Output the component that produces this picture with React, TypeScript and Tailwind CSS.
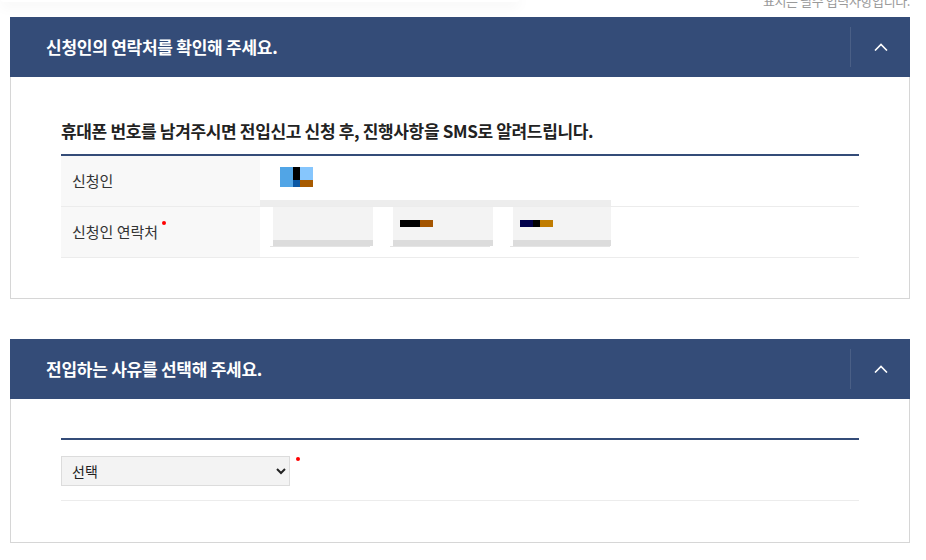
import React from "react";

const font = { fontFamily: '"Noto Sans CJK KR", "Noto Sans", sans-serif' };

function Chevron() {
  return (
    <svg width="14" height="8" viewBox="0 0 14 8" fill="none">
      <polyline points="1,7.5 7,1.5 13,7.5" stroke="#fff" strokeWidth="1.6" />
    </svg>
  );
}

function SectionHeader({ title }: { title: string }) {
  return (
    <div className="flex h-[60px] items-center bg-[#344c78]">
      <h2 className="flex-1 pl-[36px] text-[17px] font-bold tracking-[-0.015em] text-white">{title}</h2>
      <div className="h-[40px] w-px bg-[#4a5f86]" />
      <button type="button" className="flex h-[60px] w-[59px] items-center justify-center">
        <Chevron />
      </button>
    </div>
  );
}

function RedDot() {
  return <span className="inline-block h-[4px] w-[4px] rounded-full bg-[#f00]" />;
}

function Pixels({ cols }: { cols: { w: number; c: string }[] }) {
  return (
    <div className="flex h-[7px]">
      {cols.map((p, i) => (
        <div key={i} className="h-full" style={{ width: p.w, background: p.c }} />
      ))}
    </div>
  );
}

function PhoneBox({ width, pixels }: { width: number; pixels?: { w: number; c: string }[] }) {
  return (
    <div className="flex flex-col" style={{ width }}>
      <div className="h-[33px] bg-[#f3f3f3] pl-[7px] pt-[13px]">{pixels ? <Pixels cols={pixels} /> : null}</div>
      <div className="h-[6px] bg-[#dcdcdc]" />
      <div className="-ml-[3px] h-px w-[100px] bg-[#e4e4e4]" />
    </div>
  );
}

export default function App() {
  return (
    <div className="min-h-[560px] bg-white text-[#333]" style={font}>
      <div className="flex h-[17px] items-start justify-between overflow-hidden">
        <div className="-mt-[6px] h-[8px] w-[520px] rounded-full shadow-[0_4px_14px_rgba(0,0,0,0.05)]" />
        <p className="-mt-[9px] pr-[16px] text-[13px] tracking-[-0.03em] text-[#9a9a9a]">표시는 필수 입력사항입니다.</p>
      </div>

      <section className="mx-[10px] w-[900px]">
        <SectionHeader title="신청인의 연락처를 확인해 주세요." />
        <div className="border border-t-0 border-[#d6d6d6] px-[50px] pb-[40px] pt-[42px]">
          <p className="text-[17px] font-bold leading-[24px] tracking-[-0.02em] text-[#222]">
            휴대폰 번호를 남겨주시면 전입신고 신청 후, 진행사항을 SMS로 알려드립니다.
          </p>
          <div className="mt-[11px] border-t-2 border-[#344c78]">
            <div className="flex h-[51px] border-b border-[#ececec]">
              <div className="flex w-[199px] items-center bg-[#f8f8f8] pl-[11px] text-[15px]">신청인</div>
              <div className="flex flex-1 flex-col">
                <div className="ml-[20px] mt-[11px] flex h-[20px] w-[33px]">
                  <div className="w-[13px] bg-[#51a5e6]" />
                  <div className="flex w-[7px] flex-col">
                    <div className="h-[13px] bg-black" />
                    <div className="flex-1 bg-[#0b57a4]" />
                  </div>
                  <div className="flex w-[13px] flex-col">
                    <div className="h-[13px] bg-[#86c6fd]" />
                    <div className="flex-1 bg-[#a75a00]" />
                  </div>
                </div>
                <div className="mt-auto h-[6px] w-[351px] bg-[#ededed]" />
              </div>
            </div>
            <div className="flex h-[51px] border-b border-[#ececec]">
              <div className="flex w-[199px] items-center bg-[#f8f8f8] pl-[11px] text-[15px]">
                <span className="relative">
                  신청인 연락처
                  <span className="absolute -right-[8px] top-0 flex">
                    <RedDot />
                  </span>
                </span>
              </div>
              <div className="flex flex-1 items-start gap-[20px] pl-[13px]">
                <PhoneBox width={100} />
                <PhoneBox
                  width={100}
                  pixels={[
                    { w: 20, c: "#000" },
                    { w: 13, c: "#a35400" },
                  ]}
                />
                <PhoneBox
                  width={98}
                  pixels={[
                    { w: 13, c: "#00004a" },
                    { w: 7, c: "#000" },
                    { w: 13, c: "#c07c00" },
                  ]}
                />
              </div>
            </div>
          </div>
        </div>
      </section>

      <section className="mx-[10px] mt-[40px] w-[900px]">
        <SectionHeader title="전입하는 사유를 선택해 주세요." />
        <div className="border border-t-0 border-[#d6d6d6] px-[50px] pb-[41px] pt-[39px]">
          <div className="border-t-2 border-[#344c78]">
            <div className="flex items-start border-b border-[#ececec] pb-[14px] pt-[16px]">
              <select
                className="h-[30px] w-[229px] border border-[#dcdcdc] bg-[#f3f3f3] pl-[6px] text-[14px] text-[#222]"
                defaultValue=""
                style={font}
              >
                <option value="">선택</option>
              </select>
              <span className="ml-[6px] mt-[1px] flex">
                <RedDot />
              </span>
            </div>
          </div>
        </div>
      </section>
    </div>
  );
}
